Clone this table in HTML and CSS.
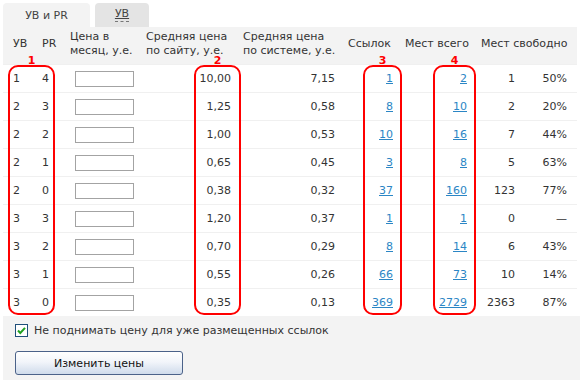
FILE: index.html
```html
<!DOCTYPE html>
<html lang="ru">
<head>
<meta charset="utf-8">
<link rel="stylesheet" href="styles.css">
</head>
<body>
<div class="sheet">
  <div class="tabs">
    <div class="tab tab-active">УВ и PR</div>
    <div class="tab tab-idle"><span class="tab-link">УВ</span></div>
  </div>

  <div class="grid">
    <div class="row head">
      <div class="c c1">УВ</div>
      <div class="c c2">PR</div>
      <div class="c c3">Цена в<br>месяц, у.е.</div>
      <div class="c c4">Средняя цена<br>по сайту, у.е.</div>
      <div class="c c5">Средняя цена<br>по системе, у.е.</div>
      <div class="c c6">Ссылок</div>
      <div class="c c7">Мест всего</div>
      <div class="c c89">Мест свободно</div>
    </div>

    <div class="row"><div class="c c1">1</div><div class="c c2">4</div><div class="c c3"><input class="price" type="text"></div><div class="c c4 num">10,00</div><div class="c c5 num">7,15</div><div class="c c6 num"><a href="#">1</a></div><div class="c c7 num"><a href="#">2</a></div><div class="c c8 num">1</div><div class="c c9 num">50%</div></div>
    <div class="row"><div class="c c1">2</div><div class="c c2">3</div><div class="c c3"><input class="price" type="text"></div><div class="c c4 num">1,25</div><div class="c c5 num">0,58</div><div class="c c6 num"><a href="#">8</a></div><div class="c c7 num"><a href="#">10</a></div><div class="c c8 num">2</div><div class="c c9 num">20%</div></div>
    <div class="row"><div class="c c1">2</div><div class="c c2">2</div><div class="c c3"><input class="price" type="text"></div><div class="c c4 num">1,00</div><div class="c c5 num">0,53</div><div class="c c6 num"><a href="#">10</a></div><div class="c c7 num"><a href="#">16</a></div><div class="c c8 num">7</div><div class="c c9 num">44%</div></div>
    <div class="row"><div class="c c1">2</div><div class="c c2">1</div><div class="c c3"><input class="price" type="text"></div><div class="c c4 num">0,65</div><div class="c c5 num">0,45</div><div class="c c6 num"><a href="#">3</a></div><div class="c c7 num"><a href="#">8</a></div><div class="c c8 num">5</div><div class="c c9 num">63%</div></div>
    <div class="row"><div class="c c1">2</div><div class="c c2">0</div><div class="c c3"><input class="price" type="text"></div><div class="c c4 num">0,38</div><div class="c c5 num">0,32</div><div class="c c6 num"><a href="#">37</a></div><div class="c c7 num"><a href="#">160</a></div><div class="c c8 num">123</div><div class="c c9 num">77%</div></div>
    <div class="row"><div class="c c1">3</div><div class="c c2">3</div><div class="c c3"><input class="price" type="text"></div><div class="c c4 num">1,20</div><div class="c c5 num">0,37</div><div class="c c6 num"><a href="#">1</a></div><div class="c c7 num"><a href="#">1</a></div><div class="c c8 num">0</div><div class="c c9 num">—</div></div>
    <div class="row"><div class="c c1">3</div><div class="c c2">2</div><div class="c c3"><input class="price" type="text"></div><div class="c c4 num">0,70</div><div class="c c5 num">0,29</div><div class="c c6 num"><a href="#">8</a></div><div class="c c7 num"><a href="#">14</a></div><div class="c c8 num">6</div><div class="c c9 num">43%</div></div>
    <div class="row"><div class="c c1">3</div><div class="c c2">1</div><div class="c c3"><input class="price" type="text"></div><div class="c c4 num">0,55</div><div class="c c5 num">0,26</div><div class="c c6 num"><a href="#">66</a></div><div class="c c7 num"><a href="#">73</a></div><div class="c c8 num">10</div><div class="c c9 num">14%</div></div>
    <div class="row last"><div class="c c1">3</div><div class="c c2">0</div><div class="c c3"><input class="price" type="text"></div><div class="c c4 num">0,35</div><div class="c c5 num">0,13</div><div class="c c6 num"><a href="#">369</a></div><div class="c c7 num"><a href="#">2729</a></div><div class="c c8 num">2363</div><div class="c c9 num">87%</div></div>
  </div>

  <div class="footer">
    <label class="check">
      <svg class="box" width="13" height="13" viewBox="0 0 13 13">
        <rect x="0.5" y="0.5" width="12" height="12" fill="#fff" stroke="#1f4f7a"/>
        <path d="M3 6.5 L5.3 9 L10 3.8" fill="none" stroke="#21a121" stroke-width="2"/>
      </svg>
      <span>Не поднимать цену для уже размещенных ссылок</span>
    </label>
    <button class="btn" type="button">Изменить цены</button>
  </div>

  <div class="mark mark1"><span class="mark-num">1</span></div>
  <div class="mark mark2"><span class="mark-num">2</span></div>
  <div class="mark mark3"><span class="mark-num">3</span></div>
  <div class="mark mark4"><span class="mark-num">4</span></div>
</div>
</body>
</html>
```

FILE: styles.css
```css
html, body {
  margin: 0;
  padding: 0;
  background: #fff;
}

.sheet {
  position: relative;
  width: 580px;
  height: 380px;
  font-family: "DejaVu Sans", Verdana, sans-serif;
  font-size: 11px;
  color: #333;
  overflow: hidden;
}

.tabs {
  display: flex;
  gap: 5px;
  padding: 3px 0 0 3px;
  height: 24px;
}

.tab {
  height: 24px;
  display: flex;
  align-items: center;
  justify-content: center;
  border-radius: 4px 4px 0 0;
  font-size: 11px;
  color: #444;
}

.tab-active {
  width: 87px;
  background: #f3f3f3;
}

.tab-idle {
  width: 54px;
  background: #e4e4e4;
}

.tab-link {
  text-decoration: underline;
  border-bottom: 1px dashed #777;
  line-height: 12px;
  padding-bottom: 1px;
}

.grid {
  margin-left: 3px;
  width: 574px;
}

.row {
  display: grid;
  grid-template-columns: 35px 29px 76px 97px 105px 57px 76px 44px 55px;
  height: 28px;
  align-items: center;
  border-top: 1px solid #f0f0f0;
  box-sizing: border-box;
}

.row.head {
  height: 37px;
  background: #f3f3f3;
  border-top: 0;
  line-height: 14px;
  padding-bottom: 4px;
}

.c {
  white-space: nowrap;
}

.head .c { padding-left: 3px; }
.head .c1 { padding-left: 10px; }
.head .c2 { padding-left: 4px; }
.head .c89 { grid-column: span 2; }

.c1 { padding-left: 10px; }
.c2 { padding-left: 4px; }
.c3 { display: flex; padding-left: 8px; }

.num { text-align: right; }
.c4.num { padding-right: 9px; }
.c5.num { padding-right: 10px; }
.c6.num { padding-right: 9px; }
.c7.num { padding-right: 11px; }
.c8.num { padding-right: 7px; }
.c9.num { padding-right: 10px; }

.price {
  width: 59px;
  height: 16px;
  box-sizing: border-box;
  border: 1px solid #a3a3a3;
  margin: 0;
  padding: 0;
  background: #fff;
}

a {
  color: #2b86c5;
  text-decoration: underline;
}

.footer {
  margin-left: 3px;
  background: #f3f3f3;
  height: 64px;
  padding: 7px 0 0 12px;
  box-sizing: border-box;
}

.check {
  display: flex;
  align-items: center;
  gap: 6px;
  height: 14px;
}

.box { display: block; }

.btn {
  display: block;
  margin-top: 14px;
  width: 168px;
  height: 24px;
  border: 1px solid #4b6289;
  border-radius: 3px;
  background: linear-gradient(#ffffff 0%, #f2f5fa 45%, #cfdbeb 100%);
  font-family: "DejaVu Sans", Verdana, sans-serif;
  font-size: 11px;
  color: #111;
  padding: 0;
}

.mark {
  position: absolute;
  top: 65px;
  height: 250px;
  border: 2px solid #f00;
  border-radius: 10px;
  box-sizing: border-box;
}

.mark1 { left: 8px; width: 47px; }
.mark2 { left: 194px; width: 47px; }
.mark3 { left: 363px; width: 39px; }
.mark4 { left: 433px; width: 43px; }

.mark-num {
  position: absolute;
  top: -11px;
  left: 0;
  right: 0;
  text-align: center;
  color: #f00;
  font-weight: bold;
  font-size: 11px;
  line-height: 9px;
}
```
